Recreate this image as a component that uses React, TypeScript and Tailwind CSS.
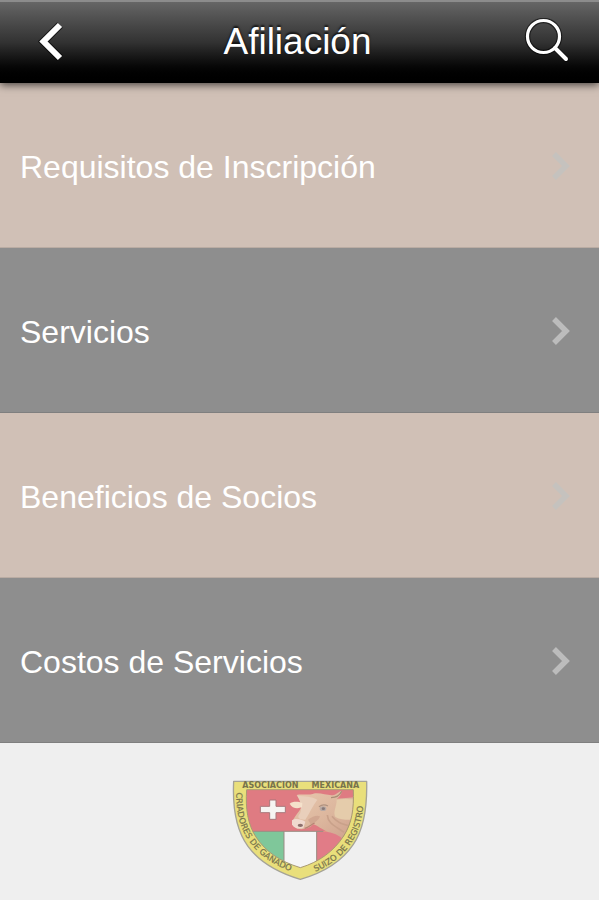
type MenuItem = { label: string; tone: "sand" | "gray" };

const items: MenuItem[] = [
  { label: "Requisitos de Inscripción", tone: "sand" },
  { label: "Servicios", tone: "gray" },
  { label: "Beneficios de Socios", tone: "sand" },
  { label: "Costos de Servicios", tone: "gray" },
];

const tones = {
  sand: { row: "bg-[#d0c0b6]", arrow: "text-[#c5c2be]" },
  gray: { row: "bg-[#8e8e8e]", arrow: "text-[#bcbcbc]" },
};

function BackIcon() {
  return (
    <svg viewBox="0 0 28 42" className="h-[42px] w-7" fill="none" aria-hidden="true">
      <path d="M22 4 5.500 20.500 22 37" stroke="#000" strokeOpacity=".6" strokeWidth="8" />
      <path d="M22 4 5.500 20.500 22 37" stroke="#fff" strokeWidth="6" />
    </svg>
  );
}

function SearchIcon() {
  return (
    <svg viewBox="0 0 48 48" className="size-12" fill="none" strokeLinecap="round" aria-hidden="true">
      <g stroke="#000" strokeOpacity=".55" strokeWidth="5.500">
        <circle cx="20.500" cy="18.500" r="16" />
        <path d="M32 30 43 41" />
      </g>
      <g stroke="#fff" strokeWidth="3.200">
        <circle cx="20.500" cy="18.500" r="16" />
        <path d="M32 30 43 41" strokeWidth="4" />
      </g>
    </svg>
  );
}

function RowArrow({ className }: { className: string }) {
  return (
    <svg viewBox="0 0 20 30" className={`h-[30px] w-5 shrink-0 ${className}`} fill="none" aria-hidden="true">
      <path d="M3 2 15 14 3 26" stroke="currentColor" strokeWidth="5.500" />
    </svg>
  );
}

function Emblem() {
  return (
    <svg viewBox="30 25 420 315" className="h-[105px] w-[140px]" role="img" aria-label="Asociacion Mexicana Criadores de Ganado Suizo de Registro">
      <defs>
        <clipPath id="field">
          <path d="M80 60H400C402 118 396 160 371 199C342 244 298 277 241 294C179 275 137 246 108 202C83 164 76 116 80 60Z" />
        </clipPath>
        <linearGradient id="hide" x1="0" y1="0" x2="1" y2="1">
          <stop offset="0" stopColor="#e8c8ae" />
          <stop offset=".55" stopColor="#dcb69d" />
          <stop offset="1" stopColor="#cda08c" />
        </linearGradient>
        <filter id="soften" x="-10%" y="-10%" width="120%" height="120%">
          <feGaussianBlur stdDeviation="2" />
        </filter>
        <path id="left-band" d="M49 68C48 137 63 188 100 231C133 269 176 296 246 315" />
        <path id="right-band" d="M286 306C333 287 373 255 399 212C424 170 431 128 431 62" />
      </defs>
      <path
        d="M41 35H440C442 119 431 179 400 224C364 278 307 310 241 329C174 309 119 278 84 230C48 181 37 116 41 35Z"
        fill="#e9df7b"
        stroke="#a5a397"
        strokeWidth="4"
        strokeLinejoin="round"
      />
      <g clipPath="url(#field)">
        <rect x="70" y="55" width="340" height="130" fill="#df7b82" />
        <rect x="70" y="185" width="122" height="120" fill="#7fc79a" />
        <rect x="192" y="185" width="98" height="120" fill="#f5f5f5" />
        <rect x="290" y="185" width="120" height="120" fill="#e17c87" />
        <path d="M70 185H310M192 185V300M290 185V300" stroke="#9b8b85" strokeWidth="3" fill="none" />
        <g filter="url(#soften)">
          <path
            d="M244 96L230 76C246 72 263 78 280 72C302 68 323 79 342 76C355 71 361 61 365 65C364 76 357 83 350 87L405 83V204L366 206C350 193 340 191 326 188C307 181 291 166 280 164C268 177 247 181 233 177C220 173 214 162 219 151C226 138 238 126 244 113Z"
            fill="url(#hide)"
          />
          <path d="M232 78C254 80 276 80 292 90C278 108 270 128 256 150C239 151 232 145 236 137C247 124 246 104 232 78Z" fill="#e9cfbb" />
          <path d="M350 90C370 86 385 90 405 88V150C384 150 364 152 346 142C338 126 350 112 350 90Z" fill="#e5ccab" />
          <path d="M322 136C324 162 344 168 372 188M336 140C350 158 364 162 385 168" stroke="#c9a18a" strokeWidth="5" fill="none" />
          <path d="M264 150C278 140 290 136 300 140C296 152 286 158 272 164Z" fill="#d1a791" />
          <path d="M216 152C227 145 242 148 256 156L250 175C234 180 222 174 216 165Z" fill="#f0d9cf" />
          <path d="M297 111C305 105 314 104 324 109" stroke="#b09280" strokeWidth="4" fill="none" />
          <ellipse cx="309" cy="117" rx="10" ry="7" fill="#b8aaa5" />
          <ellipse cx="310" cy="117" rx="5" ry="4" fill="#877877" />
          <ellipse cx="241" cy="167" rx="8" ry="5" fill="#8d6f6d" />
          <path d="M333 84C349 84 360 76 365 65" stroke="#a98d76" strokeWidth="4" fill="none" />
          <path d="M254 176C267 173 274 164 284 160" stroke="#b68474" strokeWidth="4" fill="none" />
          <path d="M209 102C218 94 235 95 247 100L246 112C235 118 216 117 209 102Z" fill="#f5e1cb" />
        </g>
      </g>
      <path
        d="M80 60H400C402 118 396 160 371 199C342 244 298 277 241 294C179 275 137 246 108 202C83 164 76 116 80 60Z"
        fill="none"
        stroke="#a99a72"
        strokeWidth="3"
      />
      <path d="M149 91H168V110H196V129H168V149H149V129H121V110H149Z" fill="#f6f4f2" stroke="#a9777b" strokeWidth="3" />
      <g className="font-['DejaVu_Sans',sans-serif]" fill="#77734d">
        <g fontSize="24" fontWeight="bold" textAnchor="middle">
          <text x="151" y="56">ASOCIACION</text>
          <text x="346" y="56">MEXICANA</text>
        </g>
        <g fontSize="25" stroke="#77734d" strokeWidth=".6">
          <text>
            <textPath href="#left-band">CRIADORES DE GANADO</textPath>
          </text>
          <text>
            <textPath href="#right-band">SUIZO DE REGISTRO</textPath>
          </text>
        </g>
      </g>
    </svg>
  );
}

export default function App() {
  return (
    <div className="flex min-h-screen flex-col bg-[#efefef] font-['Liberation_Sans',Arial,sans-serif] text-white">
      <header className="relative z-10 grid h-[83px] grid-cols-[1fr_auto_1fr] items-center border-t-2 border-[#8c8c8c] bg-linear-to-b from-[#666] via-[#323232] to-black pr-7 pb-0.5 pl-6 shadow-[0_2px_8px_rgba(0,0,0,0.65)]">
        <button type="button" aria-label="Volver" className="flex w-14 justify-center">
          <BackIcon />
        </button>
        <h1 className="text-[37px] leading-10 [text-shadow:0_-2px_2px_rgba(0,0,0,0.7)]">Afiliación</h1>
        <button type="button" aria-label="Buscar" className="justify-self-end">
          <SearchIcon />
        </button>
      </header>
      <nav aria-label="Afiliación">
        <ul>
          {items.map(({ label, tone }) => (
            <li key={label}>
              <a
                href="#"
                className={`flex h-[165px] items-center justify-between border-b border-black/10 pt-1 pr-7 pl-5 text-[32px] leading-10 ${tones[tone].row}`}
              >
                <span>{label}</span>
                <RowArrow className={tones[tone].arrow} />
              </a>
            </li>
          ))}
        </ul>
      </nav>
      <footer className="flex grow justify-center pt-[35px]">
        <Emblem />
      </footer>
    </div>
  );
}
